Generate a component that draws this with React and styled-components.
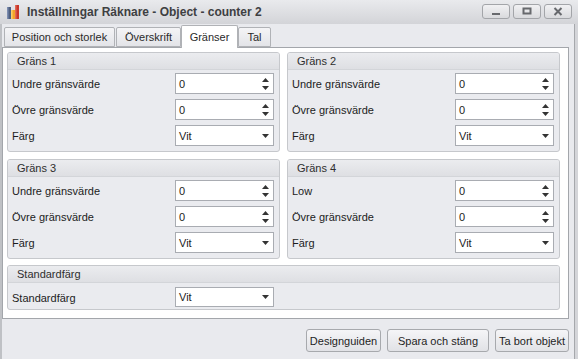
import React from 'react';
import styled, { createGlobalStyle } from 'styled-components';

const GlobalStyle = createGlobalStyle`
  html, body {
    margin: 0;
    padding: 0;
    background: #d4d5d9;
  }
  body {
    font-family: "Liberation Sans", Arial, sans-serif;
    font-size: 11px;
    color: #1c1c1c;
  }
`;

const Window = styled.div`
  width: 578px;
  height: 359px;
  display: flex;
  flex-direction: column;
  background: #d4d5d9;
  overflow: hidden;
`;

const TitleBar = styled.div`
  height: 24px;
  flex: none;
  display: flex;
  align-items: center;
  padding: 0 6px 0 6px;
  background: linear-gradient(#e9eaed, #d3d4d8);
  box-sizing: border-box;
`;

const Title = styled.div`
  flex: 1;
  margin-left: 6px;
  font-size: 12px;
  font-weight: bold;
  color: #3e3f42;
  white-space: nowrap;
`;

const WinButtons = styled.div`
  display: flex;
  gap: 3px;
  margin-top: -2px;
`;

const WinButton = styled.div`
  width: 28px;
  height: 15px;
  box-sizing: border-box;
  border: 1px solid #a3a5a9;
  border-radius: 3px;
  background: linear-gradient(#f1f1f3, #d9dadd);
  display: flex;
  align-items: center;
  justify-content: center;
`;

const Body = styled.div`
  flex: 1;
  display: flex;
  flex-direction: column;
  background: #e9eaee;
  border-left: 2px solid #bfc1c5;
  border-right: 1px solid #a6a8ac;
  margin-right: 3px;
`;

const TabStrip = styled.div`
  height: 23px;
  display: flex;
  align-items: flex-end;
  padding-left: 2px;
  position: relative;
  z-index: 1;
`;

const Tab = styled.div`
  box-sizing: border-box;
  width: ${p => p.$w}px;
  height: ${p => (p.$active ? '23px' : '20px')};
  margin-bottom: ${p => (p.$active ? '-1px' : '0')};
  margin-right: ${p => p.$gap || 0}px;
  padding-top: ${p => (p.$active ? '5px' : '3px')};
  border: 1px solid #b0b2b6;
  border-bottom: ${p => (p.$active ? 'none' : '1px solid #b0b2b6')};
  border-radius: 2px 2px 0 0;
  background: ${p => (p.$active ? '#ffffff' : 'linear-gradient(#f4f4f6, #e3e4e8)')};
  color: #2a2a2a;
  white-space: nowrap;
  line-height: 12px;
  text-align: center;
`;

const Page = styled.div`
  height: 272px;
  box-sizing: border-box;
  margin-right: 5px;
  background: #ffffff;
  border: 1px solid #a3a6ab;
  padding: 4px 0 0 4px;
  display: flex;
  flex-direction: column;
`;

const Grid = styled.div`
  display: grid;
  grid-template-columns: 273px 273px;
  column-gap: 7px;
  row-gap: 7px;
`;

const Group = styled.div`
  box-sizing: border-box;
  width: ${p => (p.$wide ? '553px' : 'auto')};
  margin-top: ${p => (p.$wide ? '6px' : '0')};
  border: 1px solid #c6c8cc;
  border-radius: 3px;
  background: #eaebef;
  overflow: hidden;
`;

const GroupHeader = styled.div`
  height: 16px;
  line-height: 17px;
  padding-left: 9px;
  background: linear-gradient(#ebecef, #dedfe3);
  border-bottom: 1px solid #d3d5d9;
  color: #2e2e2e;
`;

const GroupBody = styled.div`
  display: flex;
  flex-direction: column;
  gap: 5px;
  padding: ${p => (p.$wide ? '4px 0 2px 4px' : '3px 0 5px 4px')};
`;

const Row = styled.div`
  display: flex;
  align-items: center;
`;

const Label = styled.div`
  width: 163px;
  padding-top: 1px;
`;

const Field = styled.div`
  width: 99px;
  height: ${p => (p.$short ? '20px' : '21px')};
  box-sizing: border-box;
  border: 1px solid #a9acb2;
  background: #ffffff;
  display: flex;
  align-items: center;
  padding-left: 3px;
  justify-content: space-between;
`;

const Arrows = styled.div`
  width: 15px;
  display: flex;
  flex-direction: column;
  align-items: center;
  justify-content: center;
  gap: 4px;
`;

const Footer = styled.div`
  display: flex;
  justify-content: flex-end;
  gap: 6px;
  padding: 10px 5px 0 0;
`;

const Button = styled.div`
  width: ${p => p.$w}px;
  height: 23px;
  box-sizing: border-box;
  border: 1px solid #a7a9ad;
  border-radius: 3px;
  background: linear-gradient(#f5f5f7, #e1e2e6);
  display: flex;
  align-items: center;
  justify-content: center;
  color: #1e1e1e;
  white-space: nowrap;
`;

const Up = () => (
  <svg width="7" height="4" viewBox="0 0 7 4"><path d="M0 4 L3.5 0 L7 4 Z" fill="#333" /></svg>
);
const Down = () => (
  <svg width="7" height="4" viewBox="0 0 7 4"><path d="M0 0 L7 0 L3.5 4 Z" fill="#333" /></svg>
);

const Spin = ({ value }) => (
  <Field>
    <span>{value}</span>
    <Arrows><Up /><Down /></Arrows>
  </Field>
);

const Select = ({ value, short }) => (
  <Field $short={short}>
    <span>{value}</span>
    <Arrows><Down /></Arrows>
  </Field>
);

const LimitGroup = ({ title, lowLabel }) => (
  <Group>
    <GroupHeader>{title}</GroupHeader>
    <GroupBody>
      <Row><Label>{lowLabel}</Label><Spin value="0" /></Row>
      <Row><Label>Övre gränsvärde</Label><Spin value="0" /></Row>
      <Row><Label>Färg</Label><Select value="Vit" /></Row>
    </GroupBody>
  </Group>
);

const AppIcon = () => (
  <svg width="15" height="16" viewBox="0 0 15 16">
    <rect x="1" y="3" width="4" height="12" fill="#4f5f80" />
    <rect x="1" y="3" width="1.5" height="12" fill="#7d8db0" />
    <rect x="5" y="6" width="4" height="9" fill="#f2a42a" />
    <rect x="5" y="6" width="1.5" height="9" fill="#f9cd6a" />
    <rect x="9" y="1" width="4" height="14" fill="#c8352a" />
    <rect x="9" y="1" width="1.5" height="14" fill="#e26a55" />
  </svg>
);

export default function App() {
  return (
    <>
      <GlobalStyle />
      <Window>
        <TitleBar>
          <AppIcon />
          <Title>Inställningar Räknare - Object - counter 2</Title>
          <WinButtons>
            <WinButton>
              <svg width="10" height="9" viewBox="0 0 10 9"><rect x="1" y="6" width="8" height="2" fill="#67696d" /></svg>
            </WinButton>
            <WinButton>
              <svg width="10" height="9" viewBox="0 0 10 9"><rect x="1.5" y="1.5" width="7" height="5" fill="none" stroke="#67696d" strokeWidth="2" /></svg>
            </WinButton>
            <WinButton>
              <svg width="10" height="9" viewBox="0 0 10 9"><path d="M1.5 1 L8.5 8 M8.5 1 L1.5 8" stroke="#67696d" strokeWidth="2" /></svg>
            </WinButton>
          </WinButtons>
        </TitleBar>
        <Body>
          <TabStrip>
            <Tab $w={111} $gap={1}>Position och storlek</Tab>
            <Tab $w={65}>Överskrift</Tab>
            <Tab $w={57} $active>Gränser</Tab>
            <Tab $w={33}>Tal</Tab>
          </TabStrip>
          <Page>
            <Grid>
              <LimitGroup title="Gräns 1" lowLabel="Undre gränsvärde" />
              <LimitGroup title="Gräns 2" lowLabel="Undre gränsvärde" />
              <LimitGroup title="Gräns 3" lowLabel="Undre gränsvärde" />
              <LimitGroup title="Gräns 4" lowLabel="Low" />
            </Grid>
            <Group $wide>
              <GroupHeader>Standardfärg</GroupHeader>
              <GroupBody $wide>
                <Row><Label>Standardfärg</Label><Select value="Vit" short /></Row>
              </GroupBody>
            </Group>
          </Page>
          <Footer>
            <Button $w={75}>Designguiden</Button>
            <Button $w={102}>Spara och stäng</Button>
            <Button $w={74}>Ta bort objekt</Button>
          </Footer>
        </Body>
      </Window>
    </>
  );
}
